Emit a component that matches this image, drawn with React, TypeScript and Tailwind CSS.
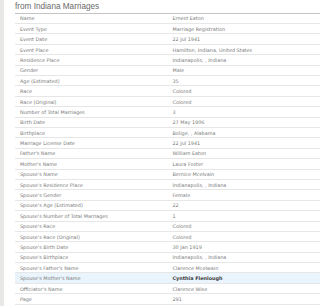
import React from "react";

const rows: [string, string][] = [
  ["Name", "Ernest Eaton"],
  ["Event Type", "Marriage Registration"],
  ["Event Date", "22 Jul 1941"],
  ["Event Place", "Hamilton, Indiana, United States"],
  ["Residence Place", "Indianapolis, , Indiana"],
  ["Gender", "Male"],
  ["Age (Estimated)", "35"],
  ["Race", "Colored"],
  ["Race (Original)", "Colored"],
  ["Number of Total Marriages", "3"],
  ["Birth Date", "27 May 1906"],
  ["Birthplace", "Bolige, , Alabama"],
  ["Marriage License Date", "22 Jul 1941"],
  ["Father's Name", "William Eaton"],
  ["Mother's Name", "Laura Foster"],
  ["Spouse's Name", "Bernice Mcelvain"],
  ["Spouse's Residence Place", "Indianapolis, , Indiana"],
  ["Spouse's Gender", "Female"],
  ["Spouse's Age (Estimated)", "22"],
  ["Spouse's Number of Total Marriages", "1"],
  ["Spouse's Race", "Colored"],
  ["Spouse's Race (Original)", "Colored"],
  ["Spouse's Birth Date", "30 Jan 1919"],
  ["Spouse's Birthplace", "Indianapolis, , Indiana"],
  ["Spouse's Father's Name", "Clarence Mcelwain"],
  ["Spouse's Mother's Name", "Cynthia Flenlough"],
  ["Officiator's Name", "Clarence Wise"],
  ["Page", "291"],
];

export default function App() {
  return (
    <div className="flex w-[331px] h-[306px] overflow-hidden bg-white">
      <div className="w-[4px] shrink-0 bg-[#e8e8e6]" />
      <div className="ml-[11px] w-[305px] shrink-0">
        <div
          className="h-[12.7px] pt-[2px] text-[8.2px] leading-[9px] text-[#6a6a6a]"
          style={{ fontFamily: '"Liberation Sans", Arial, sans-serif' }}
        >
          from Indiana Marriages
        </div>
        <div
          className="border-t border-[#c4c4c4]"
          style={{ fontFamily: '"DejaVu Sans", Verdana, sans-serif' }}
        >
          {rows.map(([k, v], i) => {
            const hl = k === "Spouse's Mother's Name";
            return (
              <div
                key={i}
                className={
                  "flex h-[10.4px] items-center border-b border-[#e6e6e6] text-[4.9px] leading-[6px] " +
                  (hl ? "bg-[#eaf4fc]" : "")
                }
              >
                <div className="w-1/2 pl-[5px] text-[#7a7a7a]">{k}</div>
                <div
                  className={
                    "w-1/2 pl-[5px] " +
                    (hl ? "font-bold text-[#3a3a3a]" : "text-[#7a7a7a]")
                  }
                >
                  {v}
                </div>
              </div>
            );
          })}
        </div>
      </div>
    </div>
  );
}
